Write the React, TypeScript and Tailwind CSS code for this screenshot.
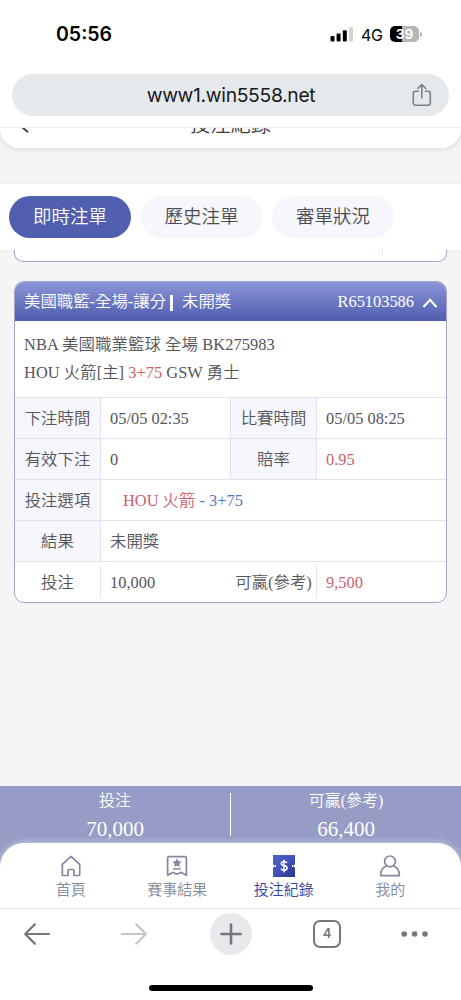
import type { ReactNode } from "react";

const sans = "font-['Inter','Noto_Sans_CJK_TC',sans-serif]";

function StatusBar() {
  return (
    <div className={`flex h-[74px] shrink-0 justify-between pl-[56px] pr-[39px] pt-[22px] ${sans}`}>
      <span className="h-6 text-[19.5px] font-semibold leading-[25px] tracking-[0px] text-black">05:56</span>
      <div className="flex h-6 items-center text-black">
        <svg width="24" height="16" viewBox="0 0 24 16">
          <rect x="0.5" y="10" width="4" height="5.5" rx="1" />
          <rect x="6.6" y="7.4" width="4" height="8.1" rx="1" />
          <rect x="12.8" y="4.2" width="4" height="11.3" rx="1" />
          <rect x="19" y="1.3" width="4" height="14.2" rx="1" fill="#d4d4d4" />
        </svg>
        <span className="ml-[7px] w-[23px] pt-px text-[16px] tracking-[-0.4px]">4G</span>
        <div className="ml-[6px] flex h-4 w-[29px] items-center justify-center rounded-[5px] bg-linear-to-r from-black from-40% to-[#b5b5b5] to-40%">
          <span className="text-[13.5px] font-bold leading-4 text-white">39</span>
        </div>
        <div className="ml-px h-[5px] w-[2px] rounded-r bg-[#b5b5b5]" />
      </div>
    </div>
  );
}

function AddressBar() {
  return (
    <div className={`h-[54px] shrink-0 border-b border-[#ececec] px-3 ${sans}`}>
      <div className="flex h-[42px] items-center rounded-full bg-[#e6e9ec] pl-[39px] pr-[16px]">
        <span className="flex-1 text-center text-[19.3px] tracking-[-0.32px] text-[#17181a]">www1.win5558.net</span>
        <svg width="22" height="24" viewBox="0 0 22 24" fill="none" stroke="#7d8186" strokeWidth="1.6" strokeLinecap="round" strokeLinejoin="round">
          <path d="M7.2 8.3H4.8A2.5 2.5 0 0 0 2.3 10.8v9A2.5 2.5 0 0 0 4.8 22.3h12a2.5 2.5 0 0 0 2.5-2.5v-9a2.5 2.5 0 0 0-2.5-2.5h-2.4M10.8 14.7V1.7M6.8 5.5l4-4 4 4" />
        </svg>
      </div>
    </div>
  );
}

function Tab({ active, children }: { active?: boolean; children: ReactNode }) {
  return (
    <button
      className={`flex h-[42px] w-[122px] items-center justify-center rounded-full pt-[2px] text-[18.5px] font-[350] ${
        active ? "bg-[#505fae] text-white" : "bg-[#f6f7fc] text-[#4c4c54]"
      }`}
    >
      {children}
    </button>
  );
}

function Label({ children }: { children: ReactNode }) {
  return <div className="flex items-center justify-center border-r border-[#e2e2f0] bg-[#f6f7fc] pt-[2px]">{children}</div>;
}

function Value({ children, className = "" }: { children: ReactNode; className?: string }) {
  return <div className={`flex items-center pl-[9px] pt-[2px] ${className}`}>{children}</div>;
}

function BetCard() {
  const pair = "grid h-[41px] grid-cols-[86px_130px_86px_1fr] border-t border-[#e2e2f0]";
  const single = "grid h-[41px] grid-cols-[86px_1fr] border-t border-[#e2e2f0]";
  return (
    <section className="mx-[14px] mt-[19px] h-[322px] shrink-0 overflow-hidden rounded-[10px] border border-[#a5a5cb] bg-white text-[16.4px] font-[350] text-[#55555c]">
      <header className="flex h-[39px] items-center bg-linear-to-b from-[#8b95d8] to-[#4f5dac] pl-[9px] pr-[8px] pt-[2px] text-white">
        <span>美國職籃-全場-讓分</span>
        <span className="ml-[4px] h-4 w-[3px] bg-white" />
        <span className="ml-[9px]">未開獎</span>
        <span className="ml-auto">R65103586</span>
        <svg className="ml-[8px]" width="16" height="12" viewBox="0 0 16 12" fill="none" stroke="#fff" strokeWidth="2.2">
          <path d="M1.5 10 8 2.8l6.5 7.2" />
        </svg>
      </header>
      <div className="h-[76px] whitespace-nowrap pl-[9px] pt-[10px] leading-[28px]">
        <p className="tracking-[0.08px]">NBA 美國職業籃球 全場 BK275983</p>
        <p className="tracking-[0.04px]">
          HOU 火箭[主] <span className="text-[#cd5e6b]">3+75</span> GSW 勇士
        </p>
      </div>
      <div className={pair}>
        <Label>下注時間</Label>
        <Value className="border-r border-[#e2e2f0]">05/05 02:35</Value>
        <Label>比賽時間</Label>
        <Value>05/05 08:25</Value>
      </div>
      <div className={pair}>
        <Label>有效下注</Label>
        <Value className="border-r border-[#e2e2f0]">0</Value>
        <Label>賠率</Label>
        <Value className="text-[#cd5e6b]">0.95</Value>
      </div>
      <div className={single}>
        <Label>投注選項</Label>
        <div className="flex items-center whitespace-pre pl-[22px] pt-[2px] text-[#5a75c2]">
          <span className="text-[#cd5e6b]">HOU 火箭</span>
          <span> - 3+75</span>
        </div>
      </div>
      <div className={single}>
        <Label>結果</Label>
        <Value>未開獎</Value>
      </div>
      <div className="grid h-[41px] grid-cols-[86px_130px_86px_1fr] border-t border-[#e2e2f0] py-1">
        <div className="flex items-center justify-center border-r border-[#e2e2f0] pt-[2px]">投注</div>
        <Value>10,000</Value>
        <div className="flex items-center justify-center whitespace-nowrap border-r border-[#e2e2f0] pt-[2px]">可贏(參考)</div>
        <Value className="text-[#cd5e6b]">9,500</Value>
      </div>
    </section>
  );
}

function Total({ label, amount }: { label: string; amount: string }) {
  return (
    <div className="flex flex-1 flex-col items-center text-white">
      <span className="h-[28px] text-[16px] font-[350] leading-[29px]">{label}</span>
      <span className="h-[28px] text-[21px] leading-[30px]">{amount}</span>
    </div>
  );
}

function NavItem({ label, active, children }: { label: string; active?: boolean; children: ReactNode }) {
  return (
    <div className={`flex w-[106.5px] flex-col items-center pt-[11px] ${active ? "text-[#3546a0]" : "text-[#85889d]"}`}>
      <svg width="24" height="24" viewBox="0 0 24 24" fill="none" stroke="currentColor" strokeWidth="1.7" strokeLinejoin="round">
        {children}
      </svg>
      <span className="text-[15px] font-[350] leading-[23px]">{label}</span>
    </div>
  );
}

function BottomArea() {
  return (
    <div className="mt-auto h-[122px] shrink-0 bg-[#969cc5]">
      <div className="flex h-[57px]">
        <Total label="投注" amount="70,000" />
        <div className="mt-[7px] h-[43px] w-px bg-white" />
        <Total label="可贏(參考)" amount="66,400" />
      </div>
      <nav className={`flex h-[65px] justify-center rounded-t-[24px] bg-white shadow-[0_-1px_6px_rgba(255,255,255,0.45)] ${sans}`}>
        <NavItem label="首頁">
          <path d="M3.3 20.5V10.3L12 2.3l8.7 8v10.2q0 1-1 1h-4.7v-5q0-1-1-1h-4q-1 0-1 1v5H4.3q-1 0-1-1Z" />
        </NavItem>
        <NavItem label="賽事結果">
          <path d="M2.6 4.2q0-1.5 1.5-1.5h15.8q1.5 0 1.5 1.5v17l-5.2-2.8-4.2 1.8-4.2-1.8-5.2 2.8ZM8.2 15h7.6" />
          <path d="m12 4.2 1.4 3 3.3.4-2.4 2.3.6 3.2-2.9-1.6-2.9 1.6.6-3.2-2.4-2.3 3.3-.4Z" fill="currentColor" stroke="none" />
        </NavItem>
        <NavItem label="投注紀錄" active>
          <defs>
            <linearGradient id="ticket" x1="0" y1="0" x2="1" y2="1">
              <stop stopColor="#5261cd" />
              <stop offset="0.5" stopColor="#4051b8" />
              <stop offset="1" stopColor="#27368b" />
            </linearGradient>
          </defs>
          <path d="M1 1h22v9.6a1.5 1.5 0 0 0 0 3V23H1v-9.4a1.5 1.5 0 0 0 0-3Z" fill="url(#ticket)" stroke="none" />
          <path d="M14.9 8.9Q14.4 7.4 12 7.4q-2.7 0-2.7 2t2.9 2.3q2.9.3 2.9 2.4t-3 2.1q-2.5 0-3.1-1.7M12 5.7v12.5" stroke="#fff" strokeWidth="1.5" />
          <path d="M3.4 11v2M20.6 11v2" stroke="#fff" strokeWidth="1.2" />
        </NavItem>
        <NavItem label="我的">
          <circle cx="12" cy="7.4" r="5.4" />
          <path d="M8.6 11.8C4.4 13.5 2.6 16.6 2.6 21.6h18.8c0-5-1.8-8.1-6-9.8" />
        </NavItem>
      </nav>
    </div>
  );
}

function BrowserToolbar() {
  return (
    <footer className={`flex h-[92px] shrink-0 flex-col items-center border-t border-[#e6e6e6] bg-white ${sans}`}>
      <div className="flex h-[50px] w-full items-center pl-[24px] text-[#75787b]">
        <svg width="26" height="24" viewBox="0 0 26 24" fill="none" stroke="currentColor" strokeWidth="2.2" strokeLinecap="round" strokeLinejoin="round">
          <path d="M25 12H1.4M10.8 2.4 1.2 12l9.6 9.6" />
        </svg>
        <svg className="ml-[70px]" width="27" height="24" viewBox="0 0 27 24" fill="none" stroke="#c7c7c9" strokeWidth="2.2" strokeLinecap="round" strokeLinejoin="round">
          <path d="M1.8 12h24M16.2 2.4l9.7 9.6-9.7 9.6" />
        </svg>
        <div className="ml-[63px] flex size-[42px] items-center justify-center rounded-full bg-[#e8e9ed]">
          <svg width="22" height="22" viewBox="0 0 22 22" stroke="currentColor" strokeWidth="2.6" strokeLinecap="round">
            <path d="M11 1.5v19M1.5 11h19" />
          </svg>
        </div>
        <div className="ml-[61px] flex size-[28px] items-center justify-center rounded-[7px] border-2 border-[#75787b] text-[13px] font-semibold">4</div>
        <svg className="ml-[60px]" width="28" height="6" viewBox="0 0 28 6" fill="currentColor">
          <circle cx="3.2" cy="3" r="2.8" />
          <circle cx="13.6" cy="3" r="2.8" />
          <circle cx="24" cy="3" r="2.8" />
        </svg>
      </div>
      <div className="mt-[26px] h-[6px] w-[164px] rounded-full bg-black" />
    </footer>
  );
}

export default function App() {
  return (
    <div className="flex h-[1000px] w-[461px] flex-col overflow-hidden bg-white font-['Liberation_Serif','Noto_Sans_CJK_TC',serif]">
      <StatusBar />
      <AddressBar />
      <main className="flex min-h-0 flex-1 flex-col bg-[#f5f5f6]">
        <div className="h-[30px] shrink-0 overflow-hidden">
          <div className="flex h-5 items-end rounded-b-[24px] bg-white pb-3 shadow-[0_1px_6px_rgba(0,0,0,0.12)]">
            <div className="flex h-2 w-full items-end justify-center overflow-hidden">
              <svg className="mr-auto ml-[21px] self-start" width="9" height="6" viewBox="0 0 9 6" fill="none" stroke="#444" strokeWidth="2">
                <path d="m1-1 6 5.2" />
              </svg>
              <span className="h-5 text-[20.3px] font-[350] leading-[19px] text-[#3b3b43]">投注紀錄</span>
              <span className="ml-auto w-[30px]" />
            </div>
          </div>
        </div>
        <div className="mt-[26px] flex h-[66px] shrink-0 items-center gap-[9.5px] bg-white pl-[9px] shadow-[0_0_5px_rgba(0,0,0,0.06)]">
          <Tab active>即時注單</Tab>
          <Tab>歷史注單</Tab>
          <Tab>審單狀況</Tab>
        </div>
        <div className="mx-[14px] h-3 shrink-0 rounded-b-[9px] border border-t-0 border-[#a5a5cb] bg-white pl-[367px]">
          <div className="h-[6px] w-px bg-[#e2e2f0]" />
        </div>
        <BetCard />
        <BottomArea />
      </main>
      <BrowserToolbar />
    </div>
  );
}
